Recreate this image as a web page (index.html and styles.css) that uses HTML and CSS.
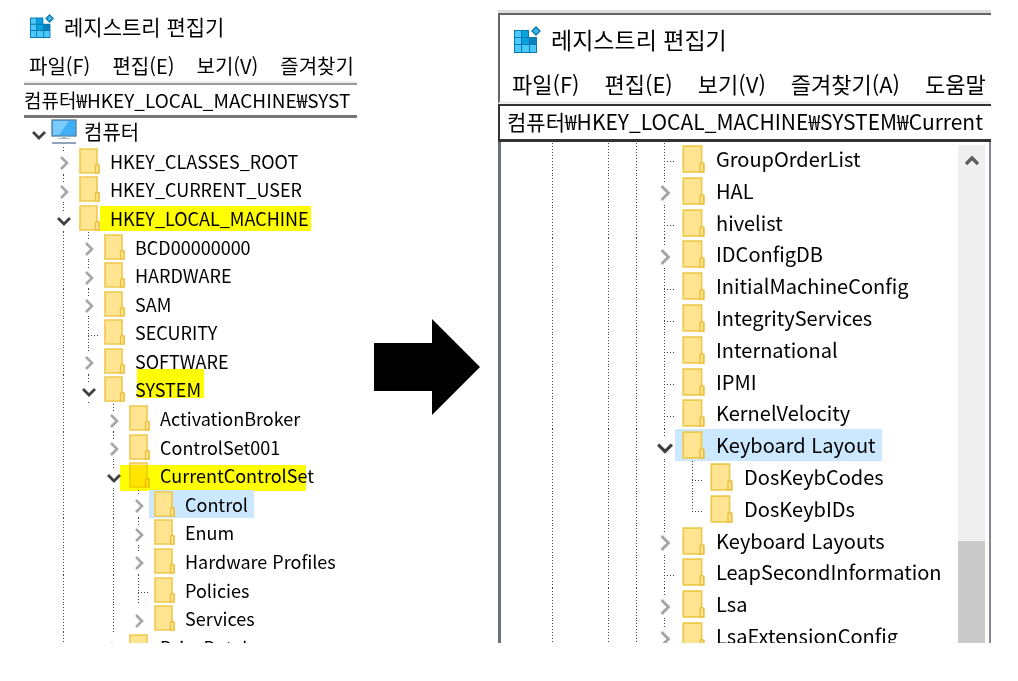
FILE: index.html
```html
<!DOCTYPE html>
<html lang="ko">
    <head>
        <meta charset="UTF-8">
        <meta name="viewport" content="width=device-width, initial-scale=1"/>
        <title>레지스트리 편집기</title>
        <link rel="stylesheet" href="styles.css">
    </head>
    <body>
        <svg class="sprite" aria-hidden="true">
            <symbol id="regedit" viewBox="0 0 27 27">
                <path d="M0 4H15V11H23V27H0Z" fill="#0878b4"/>
                <path d="M1 5H7V11H1ZM1 12H7V18H1ZM1 19H7V26H1ZM8 19H15V26H8ZM16 19H22V26H16Z" fill="#4cc9fb"/>
                <path d="M8 5H14V11H8ZM8 12H15V18H8Z" fill="#0ba2e0"/>
                <path d="M16 12H22V18H16Z" fill="#0880b8"/>
                <path d="M22 1L26 5L22 9L18 5Z" fill="#3fb5e8" stroke="#0b78ad" stroke-width="1.4"/>
            </symbol>
            <symbol id="folder" viewBox="0 0 21 26">
                <path d="M1 1H18V17H20V25H1Z" fill="#ffe591" stroke="#efc94c" stroke-width="1.6"/>
                <path d="M16.5 25V17.5L18 16L20 17.5V25Z" fill="#ffe38a" stroke="#e9bc3c" stroke-width="1.2"/>
            </symbol>
            <symbol id="computer" viewBox="0 0 26 26">
                <rect x="1" y="1" width="24" height="16" fill="#3fb0f7" stroke="#5b88ab" stroke-width="1.4"/>
                <path d="M2 2H18L8 16H2Z" fill="#78cbfb"/>
                <path d="M11 17H15V19H19V20H7V19H11Z" fill="#a9b9c8"/>
                <path d="M1 23H25V25H1Z" fill="#8fa3ba"/>
            </symbol>
            <symbol id="closed" viewBox="0 0 14 14">
                <path d="M4 1L10 7L4 13" fill="none" stroke="#a6a6a6" stroke-width="2.6"/>
            </symbol>
            <symbol id="open" viewBox="0 0 14 14">
                <path d="M1 4L7 10L13 4" fill="none" stroke="#404040" stroke-width="2.8"/>
            </symbol>
            <symbol id="up" viewBox="0 0 14 14">
                <path d="M1 11L7 5L13 11" fill="none" stroke="#606060" stroke-width="3.4"/>
            </symbol>
        </svg>

        <main class="steps">
            <section class="window small">
                <header class="titlebar">
                    <svg class="logo"><use href="#regedit"/></svg>
                    <h1>레지스트리 편집기</h1>
                </header>
                <nav class="menu">
                    <button>파일(F)</button>
                    <button>편집(E)</button>
                    <button>보기(V)</button>
                    <button>즐겨찾기</button>
                </nav>
                <input class="address" type="text" aria-label="주소" value="컴퓨터₩HKEY_LOCAL_MACHINE₩SYST">
                <ul class="tree">
                    <li><button class="toggle" aria-label="접기"><svg><use href="#open"/></svg></button><span class="node root"><svg><use href="#computer"/></svg>컴퓨터</span></li>
                    <li><i></i><button class="toggle line" aria-label="펼치기"><svg><use href="#closed"/></svg></button><span class="node"><svg><use href="#folder"/></svg>HKEY_CLASSES_ROOT</span></li>
                    <li><i></i><button class="toggle line" aria-label="펼치기"><svg><use href="#closed"/></svg></button><span class="node"><svg><use href="#folder"/></svg>HKEY_CURRENT_USER</span></li>
                    <li><i></i><button class="toggle line" aria-label="접기"><svg><use href="#open"/></svg></button><span class="node marker machine"><svg><use href="#folder"/></svg>HKEY_LOCAL_MACHINE</span></li>
                    <li><i></i><i class="line"></i><button class="toggle line" aria-label="펼치기"><svg><use href="#closed"/></svg></button><span class="node"><svg><use href="#folder"/></svg>BCD00000000</span></li>
                    <li><i></i><i class="line"></i><button class="toggle line" aria-label="펼치기"><svg><use href="#closed"/></svg></button><span class="node"><svg><use href="#folder"/></svg>HARDWARE</span></li>
                    <li><i></i><i class="line"></i><button class="toggle line" aria-label="펼치기"><svg><use href="#closed"/></svg></button><span class="node"><svg><use href="#folder"/></svg>SAM</span></li>
                    <li><i></i><i class="line"></i><i class="line leaf"></i><span class="node"><svg><use href="#folder"/></svg>SECURITY</span></li>
                    <li><i></i><i class="line"></i><button class="toggle line" aria-label="펼치기"><svg><use href="#closed"/></svg></button><span class="node"><svg><use href="#folder"/></svg>SOFTWARE</span></li>
                    <li><i></i><i class="line"></i><button class="toggle line" aria-label="접기"><svg><use href="#open"/></svg></button><span class="node marker system"><svg><use href="#folder"/></svg>SYSTEM</span></li>
                    <li><i></i><i class="line"></i><i></i><button class="toggle line" aria-label="펼치기"><svg><use href="#closed"/></svg></button><span class="node"><svg><use href="#folder"/></svg>ActivationBroker</span></li>
                    <li><i></i><i class="line"></i><i></i><button class="toggle line" aria-label="펼치기"><svg><use href="#closed"/></svg></button><span class="node"><svg><use href="#folder"/></svg>ControlSet001</span></li>
                    <li><i></i><i class="line"></i><i></i><button class="toggle line" aria-label="접기"><svg><use href="#open"/></svg></button><span class="node marker current"><svg><use href="#folder"/></svg>CurrentControlSet</span></li>
                    <li><i></i><i class="line"></i><i></i><i class="line"></i><button class="toggle line" aria-label="펼치기"><svg><use href="#closed"/></svg></button><span class="node selected"><svg><use href="#folder"/></svg>Control</span></li>
                    <li><i></i><i class="line"></i><i></i><i class="line"></i><button class="toggle line" aria-label="펼치기"><svg><use href="#closed"/></svg></button><span class="node"><svg><use href="#folder"/></svg>Enum</span></li>
                    <li><i></i><i class="line"></i><i></i><i class="line"></i><button class="toggle line" aria-label="펼치기"><svg><use href="#closed"/></svg></button><span class="node"><svg><use href="#folder"/></svg>Hardware Profiles</span></li>
                    <li><i></i><i class="line"></i><i></i><i class="line"></i><i class="line leaf"></i><span class="node"><svg><use href="#folder"/></svg>Policies</span></li>
                    <li><i></i><i class="line"></i><i></i><i class="line"></i><button class="toggle" aria-label="펼치기"><svg><use href="#closed"/></svg></button><span class="node"><svg><use href="#folder"/></svg>Services</span></li>
                    <li><i></i><i class="line"></i><i></i><button class="toggle" aria-label="펼치기"><svg><use href="#closed"/></svg></button><span class="node"><svg><use href="#folder"/></svg>DriveDatabase</span></li>
                </ul>
            </section>

            <svg class="arrow" viewBox="0 0 106 96" role="img" aria-label="다음">
                <path d="M0 24H58V0L106 48L58 96V72H0Z"/>
            </svg>

            <section class="window large">
                <header class="titlebar">
                    <svg class="logo"><use href="#regedit"/></svg>
                    <h2>레지스트리 편집기</h2>
                </header>
                <nav class="menu">
                    <button>파일(F)</button>
                    <button>편집(E)</button>
                    <button>보기(V)</button>
                    <button>즐겨찾기(A)</button>
                    <button>도움말</button>
                </nav>
                <input class="address" type="text" aria-label="주소" value="컴퓨터₩HKEY_LOCAL_MACHINE₩SYSTEM₩Current">
                <div class="view">
                    <ul class="tree">
                        <li><i class="line"></i><i></i><i class="line"></i><i class="line"></i><i class="line leaf"></i><span class="node"><svg><use href="#folder"/></svg>GroupOrderList</span></li>
                        <li><i class="line"></i><i></i><i class="line"></i><i class="line"></i><button class="toggle line" aria-label="펼치기"><svg><use href="#closed"/></svg></button><span class="node"><svg><use href="#folder"/></svg>HAL</span></li>
                        <li><i class="line"></i><i></i><i class="line"></i><i class="line"></i><i class="line leaf"></i><span class="node"><svg><use href="#folder"/></svg>hivelist</span></li>
                        <li><i class="line"></i><i></i><i class="line"></i><i class="line"></i><button class="toggle line" aria-label="펼치기"><svg><use href="#closed"/></svg></button><span class="node"><svg><use href="#folder"/></svg>IDConfigDB</span></li>
                        <li><i class="line"></i><i></i><i class="line"></i><i class="line"></i><i class="line leaf"></i><span class="node"><svg><use href="#folder"/></svg>InitialMachineConfig</span></li>
                        <li><i class="line"></i><i></i><i class="line"></i><i class="line"></i><i class="line leaf"></i><span class="node"><svg><use href="#folder"/></svg>IntegrityServices</span></li>
                        <li><i class="line"></i><i></i><i class="line"></i><i class="line"></i><i class="line leaf"></i><span class="node"><svg><use href="#folder"/></svg>International</span></li>
                        <li><i class="line"></i><i></i><i class="line"></i><i class="line"></i><i class="line leaf"></i><span class="node"><svg><use href="#folder"/></svg>IPMI</span></li>
                        <li><i class="line"></i><i></i><i class="line"></i><i class="line"></i><i class="line leaf"></i><span class="node"><svg><use href="#folder"/></svg>KernelVelocity</span></li>
                        <li><i class="line"></i><i></i><i class="line"></i><i class="line"></i><button class="toggle line" aria-label="접기"><svg><use href="#open"/></svg></button><span class="node selected"><svg><use href="#folder"/></svg>Keyboard Layout</span></li>
                        <li><i class="line"></i><i></i><i class="line"></i><i class="line"></i><i class="line"></i><i class="line leaf"></i><span class="node"><svg><use href="#folder"/></svg>DosKeybCodes</span></li>
                        <li><i class="line"></i><i></i><i class="line"></i><i class="line"></i><i class="line"></i><i class="line leaf last"></i><span class="node"><svg><use href="#folder"/></svg>DosKeybIDs</span></li>
                        <li><i class="line"></i><i></i><i class="line"></i><i class="line"></i><button class="toggle line" aria-label="펼치기"><svg><use href="#closed"/></svg></button><span class="node"><svg><use href="#folder"/></svg>Keyboard Layouts</span></li>
                        <li><i class="line"></i><i></i><i class="line"></i><i class="line"></i><i class="line leaf"></i><span class="node"><svg><use href="#folder"/></svg>LeapSecondInformation</span></li>
                        <li><i class="line"></i><i></i><i class="line"></i><i class="line"></i><button class="toggle line" aria-label="펼치기"><svg><use href="#closed"/></svg></button><span class="node"><svg><use href="#folder"/></svg>Lsa</span></li>
                        <li><i class="line"></i><i></i><i class="line"></i><i class="line"></i><button class="toggle line" aria-label="펼치기"><svg><use href="#closed"/></svg></button><span class="node"><svg><use href="#folder"/></svg>LsaExtensionConfig</span></li>
                    </ul>
                    <div class="scrollbar">
                        <button aria-label="위로"><svg><use href="#up"/></svg></button>
                        <div class="thumb"></div>
                    </div>
                </div>
            </section>
        </main>
    </body>
</html>
```
FILE: styles.css
```css
*{
    box-sizing: border-box;
}
body{
    margin: 0;
    background-color: white;
    color: black;
    font-family: "Noto Sans CJK KR", sans-serif;
}
button, input{
    font: inherit;
    color: inherit;
    border: none;
    padding: 0;
    background: none;
}
.sprite{
    display: none;
}
.steps{
    display: grid;
    grid-template-columns: 333fr 141fr 493fr;
    padding: 10px 27px 38px 24px;
}
.window{
    display: flex;
    flex-direction: column;
    min-width: 0;
    overflow: hidden;
    max-height: 633px;
}
.window > *{
    flex: none;
}
.small{
    --step: 25px;
    --mid: 12px;
    --icon: 21px;
    --gap: 10px;
    --lead: 5px;
    --pull: -2px;
    font-size: 20px;
}
.large{
    --step: 28px;
    --mid: 13px;
    --icon: 23px;
    --gap: 11px;
    --lead: 7px;
    --pull: -4px;
    font-size: 22px;
    border-top: 3px solid #ddd;
}
.titlebar{
    display: flex;
    align-items: center;
    gap: 10px;
    height: 34px;
    padding: 0 0 2px 6px;
}
.titlebar h1, .titlebar h2{
    margin: 0;
    font-size: 21px;
    font-weight: normal;
    line-height: 30px;
    white-space: nowrap;
}
.titlebar h2{
    font-size: 23px;
}
.logo{
    width: 24px;
    height: 24px;
    flex: none;
}
.menu{
    display: flex;
    align-items: center;
    gap: 22px;
    height: 39px;
    padding: 6px 0 0 5px;
    border-bottom: 2px solid #eee;
}
.menu button{
    flex: none;
    white-space: nowrap;
    line-height: 28px;
}
.address{
    width: 100%;
    height: 35px;
    padding-bottom: 2px;
    font-size: 19px;
    border-top: 2px solid #999;
    border-bottom: 3px solid #777;
    outline: none;
}
.large .titlebar{
    height: 54px;
    padding: 0 0 4px 14px;
    border-top: 2px solid #666;
    border-left: 2px solid #666;
}
.large .logo{
    width: 27px;
    height: 27px;
}
.large .menu{
    height: 37px;
    gap: 25px;
    padding: 0 0 2px 12px;
    border-left: 2px solid #666;
    border-bottom: 3px solid #eee;
}
.large .address{
    height: 38px;
    padding: 0 0 3px 7px;
    font-size: 21px;
    border: 2px solid #333;
    border-right: none;
    border-bottom-width: 3px;
}

/* tree */
.tree{
    display: grid;
    grid-auto-rows: 1fr;
    height: 543px;
    margin: 0;
    padding: 0 0 0 2px;
    list-style: none;
    font-size: 18px;
}
.tree li{
    display: flex;
    align-items: stretch;
    min-height: 0;
    white-space: nowrap;
}
.tree i, .toggle{
    flex: none;
    width: var(--step);
}
.line{
    background: repeating-linear-gradient(#444 0 1px, transparent 1px 3px) var(--mid) 0 / 1px 100% no-repeat;
}
.leaf{
    background:
        repeating-linear-gradient(#444 0 1px, transparent 1px 3px) var(--mid) 0 / 1px 100% no-repeat,
        repeating-linear-gradient(90deg, #444 0 1px, transparent 1px 3px) var(--mid) 60% / 12px 1px no-repeat;
}
.leaf.last{
    background-size: 1px 60%, 12px 1px;
}
.toggle{
    display: flex;
    align-items: center;
    justify-content: center;
    padding-top: 5px;
}
.toggle svg{
    width: 14px;
    height: 20px;
    background-color: white;
}
.node{
    position: relative;
    display: flex;
    align-items: center;
    gap: var(--gap);
    margin-left: var(--pull);
    padding: 0 6px 0 var(--lead);
    line-height: 24px;
}
.node svg{
    flex: none;
    width: var(--icon);
    height: 26px;
}
.root{
    padding-left: 2px;
    gap: 7px;
    font-size: 20px;
}
.root svg{
    width: 26px;
}
.selected{
    background-color: #cce8ff;
}
.marker::after{
    content: "";
    position: absolute;
    background-color: yellow;
    mix-blend-mode: multiply;
}
.machine::after{
    inset: 2px 4px 1px 26px;
}
.system::after{
    inset: -6px 3px 6px 38px;
}
.current::after{
    inset: 4px 14px -1px -4px;
}
.view{
    display: flex;
    height: 501px;
    padding: 1px 4px 0 0;
    border-left: 3px solid #6b6f78;
    border-right: 2px solid #858994;
    overflow: hidden;
}
.view .tree{
    flex: 1;
    height: 509px;
    padding-left: 38px;
    font-size: 20px;
}
.large .node svg{
    height: 28px;
}
.large .toggle svg{
    width: 16px;
}
.scrollbar{
    width: 27px;
    margin-top: 2px;
    background-color: #efefef;
}
.scrollbar button{
    display: flex;
    align-items: center;
    justify-content: center;
    width: 100%;
    height: 30px;
}
.scrollbar svg{
    width: 14px;
    height: 14px;
}
.thumb{
    height: 110px;
    margin-top: 366px;
    background-color: #cacaca;
}
.arrow{
    width: 106px;
    height: 96px;
    align-self: center;
    margin: 80px 0 0 17px;
}
```
